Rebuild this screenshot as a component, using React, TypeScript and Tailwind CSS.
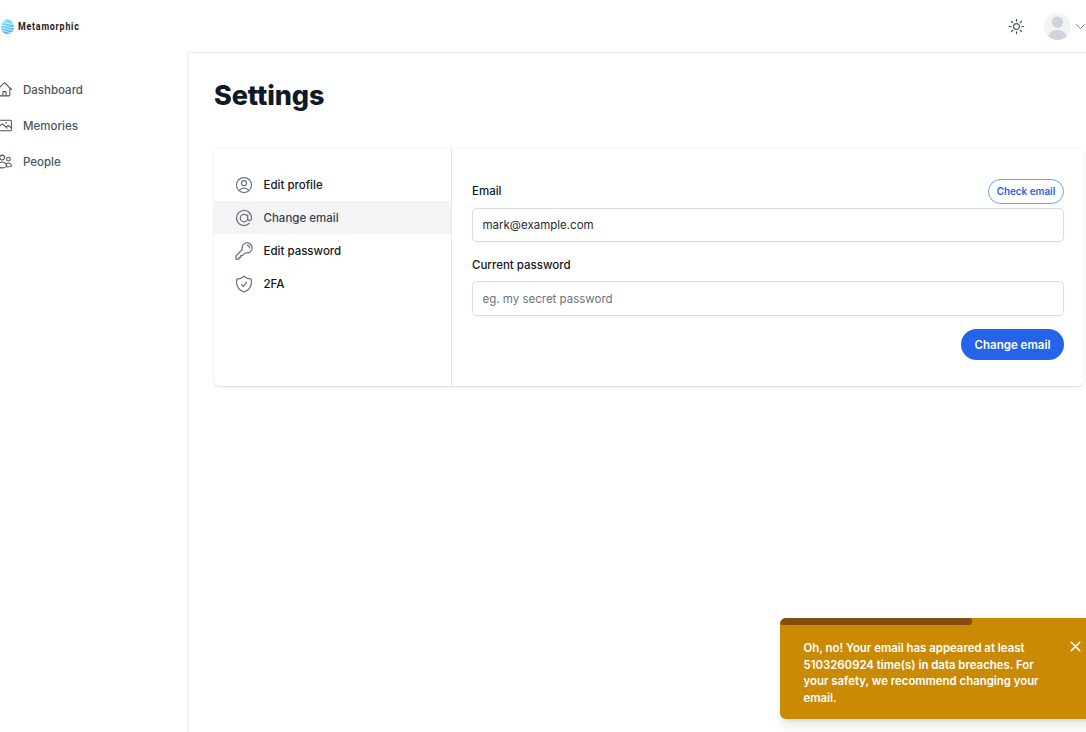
import {
  HiOutlineAtSymbol,
  HiOutlineHome,
  HiOutlineKey,
  HiOutlinePhoto,
  HiOutlineShieldCheck,
  HiOutlineSun,
  HiOutlineUserCircle,
  HiOutlineUsers,
  HiOutlineChevronDown,
} from "react-icons/hi2";

const mainNav = [
  { label: "Dashboard", Icon: HiOutlineHome },
  { label: "Memories", Icon: HiOutlinePhoto },
  { label: "People", Icon: HiOutlineUsers },
];

const settingsNav = [
  { label: "Edit profile", Icon: HiOutlineUserCircle, active: false },
  { label: "Change email", Icon: HiOutlineAtSymbol, active: true },
  { label: "Edit password", Icon: HiOutlineKey, active: false },
  { label: "2FA", Icon: HiOutlineShieldCheck, active: false },
];

function Logo() {
  return (
    <div className="flex items-center">
      <svg viewBox="0 0 13 15" className="h-[15px] w-[13px]">
        <defs>
          <linearGradient id="egg" x1="0" y1="0" x2="0.4" y2="1">
            <stop offset="0" stopColor="#b5f0fb" />
            <stop offset="0.5" stopColor="#67d3fa" />
            <stop offset="1" stopColor="#4bb0f8" />
          </linearGradient>
          <clipPath id="shell">
            <path d="M6.5 0C10 0 13 4.8 13 8.6S10 15 6.5 15 0 12.4 0 8.6 3 0 6.5 0z" />
          </clipPath>
        </defs>
        <g clipPath="url(#shell)">
          <rect width="13" height="15" fill="url(#egg)" />
          <g fill="none" stroke="#e8fbff" strokeWidth="0.9">
            <path d="M0 3.500C4 2.500 7 6 13 5" />
            <path d="M0 6.500C4 5.500 8 9.500 13 8.500" />
            <path d="M0 9.500C4 8 8 12 13 11" />
            <path d="M0 12C4 10.500 7 14.500 13 13.500" />
          </g>
        </g>
      </svg>
      <span className="mt-[2px] ml-[4px] origin-left scale-x-[0.84] font-['Roboto',sans-serif] text-[10.5px] leading-none font-bold tracking-[0.95px] text-[#1c1c1c]">
        Metamorphic
      </span>
    </div>
  );
}

export default function App() {
  return (
    <div className="relative flex h-[732px] w-[1086px] flex-col overflow-hidden bg-white font-['Inter',sans-serif] text-[11.5px]">
      <header className="flex h-[52px] shrink-0 items-center justify-between pl-px">
        <Logo />
        <div className="flex items-center">
          <HiOutlineSun className="mr-[18px] size-[19px] text-[#4b5563]" />
          <svg viewBox="0 0 27 27" className="size-[27px]">
            <clipPath id="avatar">
              <circle cx="13.500" cy="13.500" r="13.500" />
            </clipPath>
            <g clipPath="url(#avatar)">
              <rect width="27" height="27" fill="#f3f4f6" />
              <circle cx="13.500" cy="9.200" r="5.700" fill="#d1d5db" />
              <circle cx="13.500" cy="27" r="10.200" fill="#d1d5db" />
            </g>
          </svg>
          <HiOutlineChevronDown className="mr-[-1px] ml-[3px] size-[13px] text-[#6b7280]" />
        </div>
      </header>

      <div className="flex min-h-0 flex-1">
        <nav className="flex w-[187px] shrink-0 flex-col gap-[3px] pt-[21px]">
          {mainNav.map(({ label, Icon }) => (
            <a key={label} className="-ml-1 flex h-[33.200px] items-center font-medium text-[#4b5563]">
              <Icon className="mr-[10px] size-[17px]" />
              <span className="pt-[2px]">{label}</span>
            </a>
          ))}
        </nav>

        <main className="min-w-0 flex-1 border-t border-l-2 border-t-[#ebecee] border-l-gray-100 pr-[2px] pl-[25px]">
          <h1 className="mt-[26px] text-[27px] leading-[33px] font-extrabold tracking-[-0.1px] text-[#111827]">
            Settings
          </h1>

          <section className="mt-[36px] flex h-[238px] rounded-[6px] shadow-[0_0_0_1px_rgba(0,0,0,0.02),0_1px_2px_rgba(0,0,0,0.12)]">
            <div className="w-[238px] shrink-0 border-r border-[#e5e7eb] pt-[20px]">
              {settingsNav.map(({ label, Icon, active }) => (
                <a
                  key={label}
                  className={`flex h-[33px] items-center pl-[19.500px] font-medium ${active ? "bg-[#f3f4f6] text-[#374151]" : "text-[#111827]"}`}
                >
                  <Icon className="mr-[10px] size-[20px] text-[#6b7280]" />
                  <span className="pt-[2px]">{label}</span>
                </a>
              ))}
            </div>

            <form className="flex flex-1 flex-col px-[20px] pt-[31px] font-medium text-[#111827]">
              <div className="flex h-[25px] items-center justify-between">
                <label htmlFor="email">Email</label>
                <button
                  type="button"
                  className="h-[25px] w-[76px] rounded-full border border-[#60a5fa] text-[9.9px] font-semibold text-[#2563eb]"
                >
                  Check email
                </button>
              </div>
              <input
                id="email"
                defaultValue="mark@example.com"
                className="mt-[4px] h-[34px] rounded-[5px] border border-[#d9dce1] px-[9.500px] font-normal text-[#1f2937] shadow-xs"
              />
              <label htmlFor="password" className="mt-[13px] leading-[20px]">
                Current password
              </label>
              <input
                id="password"
                placeholder="eg. my secret password"
                className="mt-[6px] h-[35px] rounded-[5px] border border-[#d9dce1] px-[9.500px] font-normal shadow-xs placeholder:text-[#6b7280]"
              />
              <button
                type="button"
                className="mt-[13px] h-[31px] w-[103px] self-end rounded-full bg-[#2563eb] pt-[2px] font-semibold text-white"
              >
                Change email
              </button>
            </form>
          </section>
        </main>
      </div>

      <div className="absolute top-[618px] left-[780px] h-[101px] w-[330px] overflow-hidden rounded-[6px] bg-[#ca8a04] shadow-[0_7px_12px_-2px_rgba(0,0,0,0.12),0_3px_5px_-3px_rgba(0,0,0,0.1)]">
        <div className="h-[7px] w-[192px] rounded-[3px] bg-[#854d0e]" />
        <div className="flex pt-[15px] pl-[23.500px] text-[11.4px] text-white">
          <p className="w-[245px] leading-[16.500px] font-semibold">
            Oh, no! Your email has appeared at least
            <br />
            5103260924 time(s) in data breaches. For
            <br />
            your safety, we recommend changing your
            <br />
            email.
          </p>
          <svg
            viewBox="0 0 24 24"
            fill="none"
            stroke="currentColor"
            strokeWidth="2.2"
            strokeLinecap="round"
            className="mt-[-2px] ml-[18.500px] size-[17px]"
          >
            <path d="M6 18 18 6M6 6l12 12" />
          </svg>
        </div>
      </div>
    </div>
  );
}
